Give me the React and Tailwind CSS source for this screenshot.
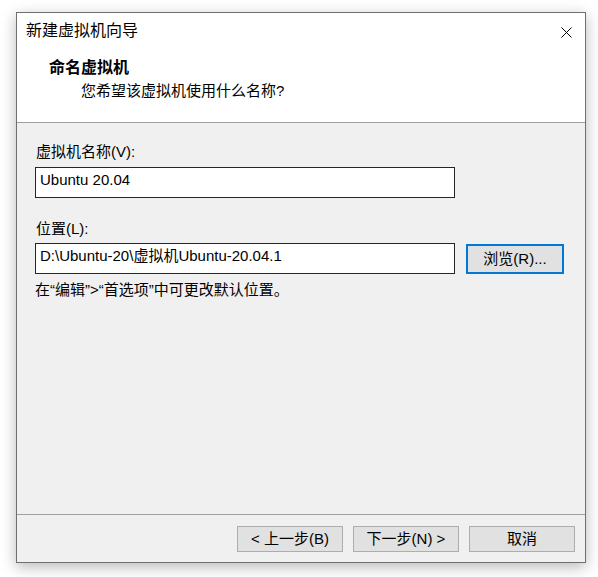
import React from "react";

const font = "font-['Liberation_Sans','Noto_Sans_CJK_SC',sans-serif]";

const FooterButton = ({ children }) => (
  <button className="w-[106px] h-[26px] bg-[#e1e1e1] border border-[#adadad] text-[15px] leading-[20px] text-black flex items-center justify-center">
    {children}
  </button>
);

const App = () => {
  return (
    <div className={`w-[598px] h-[577px] bg-white pt-[12px] pl-[16px] ${font}`}>
      <div className="w-[570px] h-[551px] border border-[#6f6f6f] bg-[#f0f0f0] flex flex-col shadow-[0_4px_14px_rgba(0,0,0,0.28)]">
        {/* Header */}
        <div className="h-[109px] bg-white flex flex-col">
          <div className="h-[38px] flex items-start">
            <span className="pl-[9px] pt-[8px] text-[16px] leading-[20px] text-black">新建虚拟机向导</span>
            <svg className="ml-auto mr-[13px] mt-[14px]" width="11" height="11" viewBox="0 0 11 11">
              <path d="M0.5 0.5 L10.5 10.5 M10.5 0.5 L0.5 10.5" stroke="#000" strokeWidth="1" fill="none" />
            </svg>
          </div>
          <div className="pl-[32px] mt-[7px] text-[16px] leading-[20px] font-bold text-black">命名虚拟机</div>
          <div className="pl-[64px] mt-[3px] text-[15px] leading-[20px] text-black">您希望该虚拟机使用什么名称?</div>
        </div>
        <div className="h-px bg-[#a0a0a0]" />

        {/* Body */}
        <div className="flex-1 pt-[19px] pl-[18px] flex flex-col text-[15px] leading-[20px] text-black">
          <div className="pl-px">虚拟机名称(V):</div>
          <div className="mt-[5px] w-[420px] h-[31px] border border-[#262626] bg-white pl-[4px] pt-[2px]">Ubuntu 20.04</div>
          <div className="mt-[21px] pl-px">位置(L):</div>
          <div className="mt-[4px] flex items-start">
            <div className="w-[420px] h-[31px] border border-[#262626] bg-white pl-[4px] pt-[2px]">
              D:\Ubuntu-20\虚拟机Ubuntu-20.04.1
            </div>
            <button className="ml-[11px] mt-px w-[98px] h-[30px] border-2 border-[#0078d7] bg-[#e1e1e1] flex items-center justify-center">
              浏览(R)...
            </button>
          </div>
          <div className="mt-[6px]">在“编辑”&gt;“首选项”中可更改默认位置。</div>
        </div>

        {/* Footer */}
        <div className="h-px bg-[#a0a0a0]" />
        <div className="h-[47px] pt-[11px] pr-[10px] flex justify-end gap-[10px]">
          <FooterButton>&lt; 上一步(B)</FooterButton>
          <FooterButton>下一步(N) &gt;</FooterButton>
          <FooterButton>取消</FooterButton>
        </div>
      </div>
    </div>
  );
};

export default App;
